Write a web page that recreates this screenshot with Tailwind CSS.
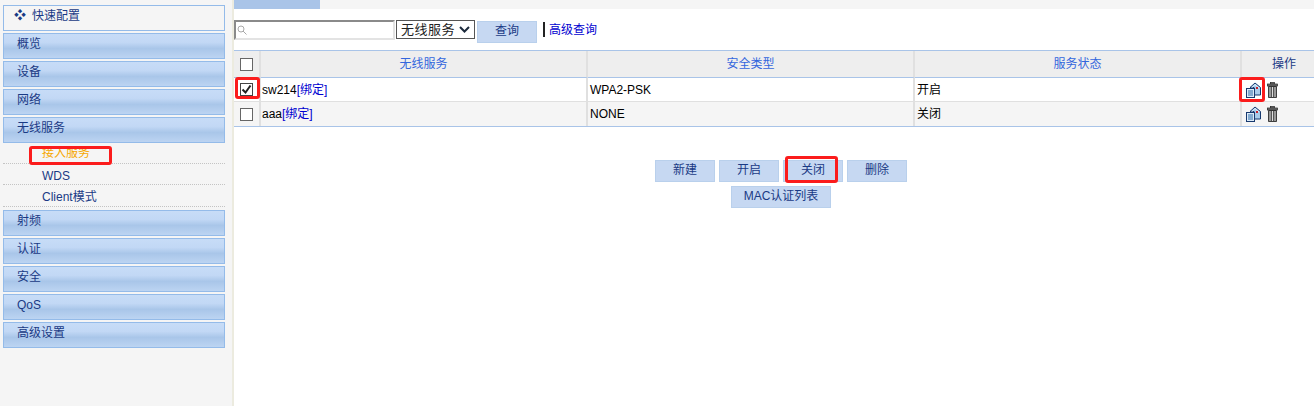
<!DOCTYPE html>
<html lang="zh">
<head>
<meta charset="utf-8"/>
<title>无线服务</title>
<script src="https://cdn.jsdelivr.net/npm/@tailwindcss/browser@4"></script>
</head>
<body class="bg-white font-['Liberation_Sans','Noto_Sans_CJK_SC',sans-serif] text-[12px] text-black overflow-hidden">
<svg class="absolute h-0 w-0">
  <symbol id="edit" viewBox="0 0 16 16">
    <path d="M5 5.500 10 1l5.500 4.500V13H9V5.500z" fill="#a9cdec" stroke="#17396f"/>
    <path d="M6.500 6 10 2.500 14 6" fill="none" stroke="#eaf4fc"/>
    <rect x="11" y="5" width="2" height="2" fill="#c8202c"/>
    <rect x="1.500" y="6.500" width="8" height="9" fill="#dcebf8" stroke="#17396f"/>
    <path d="M3 9h5M3 11h5M3 13h5" stroke="#2a6aa8"/>
  </symbol>
  <symbol id="trash" viewBox="0 0 11 16">
    <rect x="3.500" y="0.500" width="4" height="1.500" fill="#999" stroke="#222" stroke-width=".7"/>
    <rect x=".5" y="2" width="10" height="2" fill="#777" stroke="#222" stroke-width=".7"/>
    <path d="M1.500 4.500h8V15.500h-8z" fill="#555" stroke="#111" stroke-width=".7"/>
    <path d="M3 5v10M5.500 5v10M8 5v10" stroke="#ddd"/>
  </symbol>
</svg>

<div class="relative flex h-[406px] w-[1314px]">
  <aside class="h-full w-[234px] shrink-0 border-r-2 border-[#ecebdf] bg-[#f5f5f5] pl-[3px] pt-[5px]">
    <nav class="flex w-[222px] flex-col gap-[2px] text-[#1a3a85]">
      <a class="flex h-[26px] items-start gap-[6px] border border-[#94bbe9] pl-[10px] pt-[2px] text-[12px]"><span class="text-[12px] leading-[16px]">❖</span><span class="leading-[16px]">快速配置</span></a>
      <a class="h-[26px] border border-[#94bbe9] pl-[13px] pt-[2px] leading-[16px] [background-image:linear-gradient(#c7dcf7_0%,#c2d8f5_35%,#a9c6e9_60%,#bcd4f2_100%)]">概览</a>
      <a class="h-[26px] border border-[#94bbe9] pl-[13px] pt-[2px] leading-[16px] [background-image:linear-gradient(#c7dcf7_0%,#c2d8f5_35%,#a9c6e9_60%,#bcd4f2_100%)]">设备</a>
      <a class="h-[26px] border border-[#94bbe9] pl-[13px] pt-[2px] leading-[16px] [background-image:linear-gradient(#c7dcf7_0%,#c2d8f5_35%,#a9c6e9_60%,#bcd4f2_100%)]">网络</a>
      <a class="h-[26px] border border-[#94bbe9] pl-[13px] pt-[2px] leading-[16px] [background-image:linear-gradient(#c7dcf7_0%,#c2d8f5_35%,#a9c6e9_60%,#bcd4f2_100%)]">无线服务</a>
      <ul class="-mt-[2px] flex h-[65px] flex-col">
        <li class="h-[21px] border-b border-dotted border-[#c4c4c4] pl-[39px] pt-[2px] leading-[16px] text-[#f5a800]">接入服务</li>
        <li class="h-[21px] border-b border-dotted border-[#c4c4c4] pl-[39px] pt-[4px] leading-[16px]">WDS</li>
        <li class="h-[22px] border-b border-dotted border-[#c4c4c4] pl-[39px] pt-[4px] leading-[16px]">Client模式</li>
      </ul>
      <a class="h-[26px] border border-[#94bbe9] pl-[13px] pt-[2px] leading-[16px] [background-image:linear-gradient(#c7dcf7_0%,#c2d8f5_35%,#a9c6e9_60%,#bcd4f2_100%)]">射频</a>
      <a class="h-[26px] border border-[#94bbe9] pl-[13px] pt-[2px] leading-[16px] [background-image:linear-gradient(#c7dcf7_0%,#c2d8f5_35%,#a9c6e9_60%,#bcd4f2_100%)]">认证</a>
      <a class="h-[26px] border border-[#94bbe9] pl-[13px] pt-[2px] leading-[16px] [background-image:linear-gradient(#c7dcf7_0%,#c2d8f5_35%,#a9c6e9_60%,#bcd4f2_100%)]">安全</a>
      <a class="h-[26px] border border-[#94bbe9] pl-[13px] pt-[2px] leading-[16px] [background-image:linear-gradient(#c7dcf7_0%,#c2d8f5_35%,#a9c6e9_60%,#bcd4f2_100%)]">QoS</a>
      <a class="h-[26px] border border-[#94bbe9] pl-[13px] pt-[2px] leading-[16px] [background-image:linear-gradient(#c7dcf7_0%,#c2d8f5_35%,#a9c6e9_60%,#bcd4f2_100%)]">高级设置</a>
    </nav>
  </aside>

  <main class="min-w-0 flex-1">
    <div class="h-[9px] bg-[#f5f5f5]"><div class="h-full w-[86px] bg-[#a9c4e8]"></div></div>

    <div class="mt-[11px] flex items-start">
      <div class="flex h-[20px] w-[161px] items-center border-2 border-b-[#e3e3e3] border-r-[#e3e3e3] border-l-[#8a8a8a] border-t-[#8a8a8a] bg-white pl-[1px]">
        <svg width="10" height="10" viewBox="0 0 10 10" fill="none" stroke="#a9a9a9"><circle cx="4" cy="4" r="3"/><path d="m6 6 3.500 3.500"/></svg>
      </div>
      <div class="ml-[1px] flex h-[19px] w-[79px] items-center justify-between border border-[#555] px-[4px] text-[13px] text-[#222]">
        <span class="leading-none tracking-[0.5px]">无线服务</span>
        <svg width="11" height="7" viewBox="0 0 11 7" fill="none" stroke="#1c2a3c" stroke-width="2"><path d="m1 1 4.500 4.500L10 1"/></svg>
      </div>
      <button class="ml-[2px] mt-[1px] h-[22px] w-[60px] border border-[#b9d0ec] bg-[#c6d8f2] pb-[2px] text-[#1a3a85]">查询</button>
      <span class="ml-[6px] mt-[2px] h-[15px] w-[2px] bg-[#222]"></span>
      <a class="ml-[4px] mt-[1px] leading-[18px] text-[#0000d0]">高级查询</a>
    </div>

    <div class="mt-[7px] grid grid-cols-[27px_327px_327px_327px_72px] border-y border-[#a9c4e8]">
      <div class="flex h-[26px] items-center justify-center border-r-2 border-[#e0e0e0] bg-[#eeeeee]"><span class="h-[13px] w-[13px] border border-[#666] bg-white"></span></div>
      <div class="flex h-[26px] items-center justify-center border-r-2 border-[#e0e0e0] bg-[#eeeeee] text-[#3366dd]">无线服务</div>
      <div class="flex h-[26px] items-center justify-center border-r-2 border-[#e0e0e0] bg-[#eeeeee] text-[#3366dd]">安全类型</div>
      <div class="flex h-[26px] items-center justify-center border-r-2 border-[#e0e0e0] bg-[#eeeeee] text-[#3366dd]">服务状态</div>
      <div class="flex h-[26px] items-center justify-center bg-[#eeeeee] pl-[12px] text-[#1a3a85]">操作</div>

      <div class="flex h-[24px] items-center justify-center border-r-2 border-t border-[#e0e0e0] border-t-[#a9c4e8]">
        <span class="flex h-[13px] w-[13px] items-center justify-center border border-[#444] bg-white"><svg width="11" height="11" viewBox="0 0 11 11" fill="none" stroke="#222" stroke-width="2"><path d="m1.500 5.500 3 3 5-7"/></svg></span>
      </div>
      <div class="flex h-[24px] items-center border-r-2 border-t border-[#e0e0e0] border-t-[#a9c4e8] pl-[1px]">sw214<a class="text-[#0000d0]">[绑定]</a></div>
      <div class="flex h-[24px] items-center border-r-2 border-t border-[#e0e0e0] border-t-[#a9c4e8] pl-[2px]">WPA2-PSK</div>
      <div class="flex h-[24px] items-center border-r-2 border-t border-[#e0e0e0] border-t-[#a9c4e8] pl-[2px]">开启</div>
      <div class="flex h-[24px] items-center gap-[6px] border-t border-t-[#a9c4e8] pl-[3px]"><svg width="16" height="16"><use href="#edit"/></svg><svg width="11" height="16"><use href="#trash"/></svg></div>

      <div class="flex h-[25px] items-center justify-center border-r-2 border-t border-[#e0e0e0] bg-[#f5f5f5]"><span class="h-[13px] w-[13px] border border-[#666] bg-white"></span></div>
      <div class="flex h-[25px] items-center border-r-2 border-t border-[#e0e0e0] bg-[#f5f5f5] pl-[1px]">aaa<a class="text-[#0000d0]">[绑定]</a></div>
      <div class="flex h-[25px] items-center border-r-2 border-t border-[#e0e0e0] bg-[#f5f5f5] pl-[2px]">NONE</div>
      <div class="flex h-[25px] items-center border-r-2 border-t border-[#e0e0e0] bg-[#f5f5f5] pl-[2px]">关闭</div>
      <div class="flex h-[25px] items-center gap-[6px] border-t border-[#e0e0e0] bg-[#f5f5f5] pl-[3px]"><svg width="16" height="16"><use href="#edit"/></svg><svg width="11" height="16"><use href="#trash"/></svg></div>
    </div>

    <div class="mt-[33px] flex flex-col items-center gap-[4px] pl-[14px]">
      <div class="flex gap-[4px]">
        <button class="h-[22px] w-[60px] border border-[#b9d0ec] bg-[#c6d8f2] pb-[2px] text-[#1a3a85]">新建</button>
        <button class="h-[22px] w-[60px] border border-[#b9d0ec] bg-[#c6d8f2] pb-[2px] text-[#1a3a85]">开启</button>
        <button class="h-[22px] w-[60px] border border-[#b9d0ec] bg-[#c6d8f2] pb-[2px] text-[#1a3a85]">关闭</button>
        <button class="h-[22px] w-[60px] border border-[#b9d0ec] bg-[#c6d8f2] pb-[2px] text-[#1a3a85]">删除</button>
      </div>
      <button class="h-[22px] w-[100px] border border-[#b9d0ec] bg-[#c6d8f2] pb-[2px] text-[#1a3a85]">MAC认证列表</button>
    </div>
  </main>

  <div class="absolute left-[29px] top-[146px] h-[19px] w-[83px] rounded-[3px] border-[3px] border-[#fb1c1c]"></div>
  <div class="absolute left-[235px] top-[77px] h-[22px] w-[25px] rounded-[3px] border-[3px] border-[#fb1c1c]"></div>
  <div class="absolute left-[1239px] top-[77px] h-[25px] w-[26px] rounded-[3px] border-[3px] border-[#fb1c1c]"></div>
  <div class="absolute left-[785px] top-[156px] h-[27px] w-[53px] rounded-[3px] border-[3px] border-[#fb1c1c]"></div>
</div>
</body>
</html>
